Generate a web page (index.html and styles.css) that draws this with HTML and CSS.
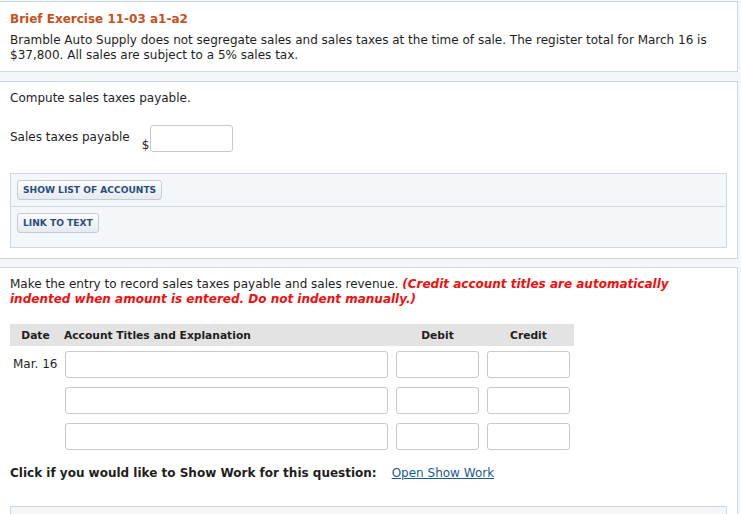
FILE: index.html
```html
<!DOCTYPE html>
<html>
<head>
<meta charset="utf-8">
<link rel="stylesheet" href="styles.css">
</head>
<body>
<div class="page">
  <div class="panel intro">
    <div class="title">Brief Exercise 11-03 a1-a2</div>
    <p class="desc">Bramble Auto Supply does not segregate sales and sales taxes at the time of sale. The register total for March 16 is $37,800. All sales are subject to a 5% sales tax.</p>
  </div>

  <div class="panel part">
    <p class="q">Compute sales taxes payable.</p>
    <div class="field">
      <span class="label">Sales taxes payable</span>
      <span class="dollar">$</span>
      <input class="box amount" type="text">
    </div>
    <div class="tools">
      <div class="tool-row"><button class="btn">SHOW LIST OF ACCOUNTS</button></div>
      <div class="tool-row last"><button class="btn">LINK TO TEXT</button></div>
    </div>
  </div>

  <div class="panel part entry">
    <p class="q">Make the entry to record sales taxes payable and sales revenue. <em class="warn">(Credit account titles are automatically indented when amount is entered. Do not indent manually.)</em></p>
    <div class="journal">
      <div class="jhead">
        <div class="c-date">Date</div>
        <div class="c-acct">Account Titles and Explanation</div>
        <div class="c-num">Debit</div>
        <div class="c-num">Credit</div>
      </div>
      <div class="jrow">
        <div class="c-date">Mar. 16</div>
        <div class="c-acct"><input class="box acct" type="text"></div>
        <div class="c-num"><input class="box num" type="text"></div>
        <div class="c-num"><input class="box num" type="text"></div>
      </div>
      <div class="jrow">
        <div class="c-date"></div>
        <div class="c-acct"><input class="box acct" type="text"></div>
        <div class="c-num"><input class="box num" type="text"></div>
        <div class="c-num"><input class="box num" type="text"></div>
      </div>
      <div class="jrow">
        <div class="c-date"></div>
        <div class="c-acct"><input class="box acct" type="text"></div>
        <div class="c-num"><input class="box num" type="text"></div>
        <div class="c-num"><input class="box num" type="text"></div>
      </div>
    </div>
    <p class="showwork"><strong>Click if you would like to Show Work for this question:</strong><a href="#" class="link">Open Show Work</a></p>
    <div class="lower"></div>
  </div>
</div>
</body>
</html>
```

FILE: styles.css
```css
html, body {
  margin: 0;
  padding: 0;
  background: #f4f7fa;
  height: 100%;
  overflow: hidden;
}
body {
  font-family: "DejaVu Sans", Verdana, sans-serif;
  font-size: 12px;
  line-height: 15px;
  color: #1e1e1e;
}
.page {
  padding: 1px 3px 0 0;
}
.panel {
  margin-left: -1px;
  background: #fff;
  border: 1px solid #cfd7e1;
}
.intro {
  padding: 9px 10px 8px 10px;
  margin-bottom: 9px;
}
.title {
  font-size: 12px;
  line-height: 16px;
  font-weight: bold;
  color: #c7501b;
}
.desc {
  margin: 6px 0 0;
}
.part {
  padding: 9px 10px 10px 10px;
  margin-bottom: 8px;
}
.q {
  margin: 0;
}
.warn {
  color: #f30d0d;
  font-weight: bold;
  font-style: italic;
}
.field {
  display: flex;
  align-items: center;
  margin-top: 19px;
}
.label {
  margin-top: -2px;
}
.dollar {
  align-self: flex-end;
  margin-left: 12px;
  margin-right: 1px;
  line-height: 13px;
}
.box {
  box-sizing: border-box;
  border: 1px solid #c9c9c9;
  border-radius: 3px;
  background: #fff;
  height: 27px;
  margin: 0;
  padding: 0 4px;
  font: inherit;
}
.amount {
  width: 83px;
}
.tools {
  margin-top: 21px;
  background: #f4f7fa;
  border: 1px solid #cfd7e1;
}
.tool-row {
  padding: 6px 6px 6px;
  border-bottom: 1px solid #cfd7e1;
}
.tool-row.last {
  border-bottom: none;
  padding-bottom: 14px;
}
.btn {
  display: block;
  height: 20px;
  padding: 0 5px;
  border: 1px solid #c6ccd3;
  border-radius: 3px;
  background: linear-gradient(#fbfcfd, #e6ebf0);
  color: #2c4d7e;
  font-family: "DejaVu Sans", Verdana, sans-serif;
  font-size: 9.1px;
  font-weight: bold;
  line-height: 18px;
}
.entry {
  padding-bottom: 0;
  margin-bottom: 0;
  height: 600px;
}
.journal {
  width: 564px;
  margin-top: 17px;
}
.jhead, .jrow {
  display: grid;
  grid-template-columns: 51px 331px 91px 91px;
}
.jhead {
  background: #e3e3e3;
  height: 22px;
  font-size: 10.7px;
  font-weight: bold;
  align-items: center;
}
.jhead .c-date, .jhead .c-num {
  text-align: center;
}
.jhead .c-acct {
  padding-left: 3px;
}
.jrow {
  padding: 5px 0 4px;
  align-items: center;
}
.jrow .c-date {
  padding-left: 3px;
}
.jrow .c-acct, .jrow .c-num {
  padding: 0 4px;
}
.acct, .num {
  width: 100%;
  display: block;
}
.showwork {
  margin: 12px 0 0;
}
.link {
  margin-left: 15px;
  color: #1d5a96;
  text-decoration: underline;
}
.lower {
  margin-top: 25px;
  height: 40px;
  background: #f4f7fa;
  border: 1px solid #cfd7e1;
}
```
